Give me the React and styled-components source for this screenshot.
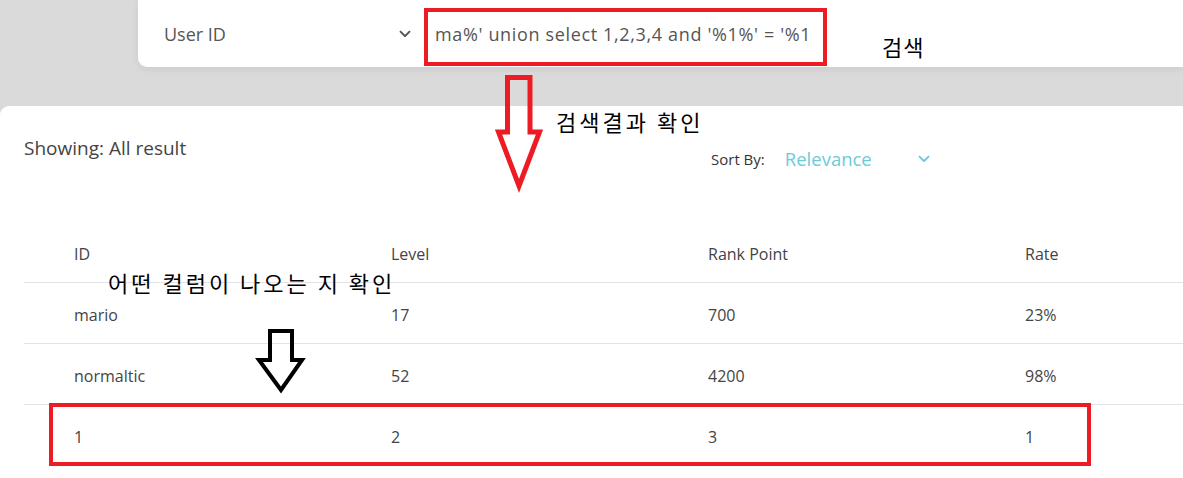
import React from 'react';
import styled, { createGlobalStyle } from 'styled-components';

const GlobalStyle = createGlobalStyle`
html, body {
  margin: 0;
  padding: 0;
}
body {
  background: #dadada;
  font-family: 'Open Sans', 'Noto Sans', sans-serif;
  overflow: hidden;
}
`;

const PAGE = styled.div`
position: relative;
width: 1183px;
height: 478px;
overflow: hidden;
display: flex;
flex-direction: column;
`;

const SEARCHBAR = styled.div`
margin-left: 138px;
height: 67px;
flex-shrink: 0;
background: #ffffff;
border-bottom-left-radius: 9px;
box-shadow: 0 2px 8px rgba(0,0,0,.07);
display: flex;
align-items: center;
`;

const SELECT = styled.div`
width: 286px;
box-sizing: border-box;
padding: 0 13px 0 26px;
display: flex;
align-items: center;
justify-content: space-between;
font-size: 18px;
color: #555;
`;

const QUERY = styled.div`
padding-left: 11px;
font-size: 18px;
letter-spacing: 0.65px;
color: #555;
white-space: nowrap;
`;

const PANEL = styled.div`
margin-top: 39px;
flex: 1;
background: #ffffff;
border-top-left-radius: 9px;
padding-left: 24px;
`;

const PANELHEAD = styled.div`
height: 50px;
padding-top: 30px;
display: grid;
grid-template-columns: 687px auto;
align-items: start;
`;

const SHOWING = styled.div`
font-size: 19px;
line-height: 24px;
color: #444;
`;

const SORT = styled.div`
margin-top: 10px;
display: flex;
align-items: center;
.label {
  font-size: 15px;
  color: #333;
}
.value {
  margin-left: 20px;
  width: 145px;
  display: flex;
  align-items: center;
  justify-content: space-between;
  font-size: 18.5px;
  color: #6ccad9;
}
`;

const TABLE = styled.table`
margin-top: 35px;
border-collapse: collapse;
width: 1268px;
table-layout: fixed;
td, th {
  height: 61px;
  box-sizing: border-box;
  padding: 5px 0 0 50px;
  text-align: left;
  font-weight: 400;
  font-size: 16px;
  color: #444;
  border-bottom: 1px solid #e2e2e8;
}
tr:last-child td {
  border-bottom: none;
}
`;

const NOTE = styled.div`
position: absolute;
left: ${p => p.x}px;
top: ${p => p.y}px;
font-family: 'Noto Sans CJK KR', sans-serif;
font-size: 22px;
line-height: 24px;
color: #000;
letter-spacing: ${p => p.spacing || 0}px;
white-space: nowrap;
`;

const HIGHLIGHT = styled.div`
position: absolute;
left: ${p => p.x}px;
top: ${p => p.y}px;
width: ${p => p.w}px;
height: ${p => p.h}px;
box-sizing: border-box;
border: 4px solid #ed1c24;
pointer-events: none;
`;

const ARROWS = styled.svg`
position: absolute;
left: 0;
top: 0;
pointer-events: none;
`;

const Chevron = ({ color, size = 12 }) => (
  <svg width={size} height={size * 0.6} viewBox="0 0 12 7" fill="none">
    <path d="M1 1l5 5 5-5" stroke={color} strokeWidth="2" />
  </svg>
);

const rows = [
  ['mario', '17', '700', '23%'],
  ['normaltic', '52', '4200', '98%'],
  ['1', '2', '3', '1'],
];

const App = () => {
  return (
    <PAGE>
      <GlobalStyle />
      <SEARCHBAR>
        <SELECT>
          <span>User ID</span>
          <Chevron color="#555" />
        </SELECT>
        <QUERY>ma%' union select 1,2,3,4 and '%1%' = '%1</QUERY>
      </SEARCHBAR>
      <PANEL>
        <PANELHEAD>
          <SHOWING>Showing: All result</SHOWING>
          <SORT>
            <span className="label">Sort By:</span>
            <span className="value">
              Relevance
              <Chevron color="#6ccad9" />
            </span>
          </SORT>
        </PANELHEAD>
        <TABLE>
          <thead>
            <tr>
              <th>ID</th>
              <th>Level</th>
              <th>Rank Point</th>
              <th>Rate</th>
            </tr>
          </thead>
          <tbody>
            {rows.map((r, i) => (
              <tr key={i}>
                {r.map((c, j) => <td key={j}>{c}</td>)}
              </tr>
            ))}
          </tbody>
        </TABLE>
      </PANEL>

      {/* annotations */}
      <HIGHLIGHT x={424} y={8} w={403} h={58} />
      <HIGHLIGHT x={49} y={403} w={1042} h={63} />
      <NOTE x={882} y={34} spacing={1}>검색</NOTE>
      <NOTE x={556} y={109} spacing={3}>검색결과 확인</NOTE>
      <NOTE x={108} y={270} spacing={3}>어떤 컬럼이 나오는 지 확인</NOTE>
      <ARROWS width="1183" height="478">
        <polygon
          points="507.5,77.5 530,77.5 530,132 539.5,132 519,186 498.5,132 507.5,132"
          fill="none" stroke="#ed1c24" strokeWidth="5" strokeLinejoin="miter" />
        <polygon
          points="270,331 292,331 292,360 302,360 281,390 259,360 270,360"
          fill="none" stroke="#000" strokeWidth="4" strokeLinejoin="miter" />
      </ARROWS>
    </PAGE>
  );
};

export default App;
